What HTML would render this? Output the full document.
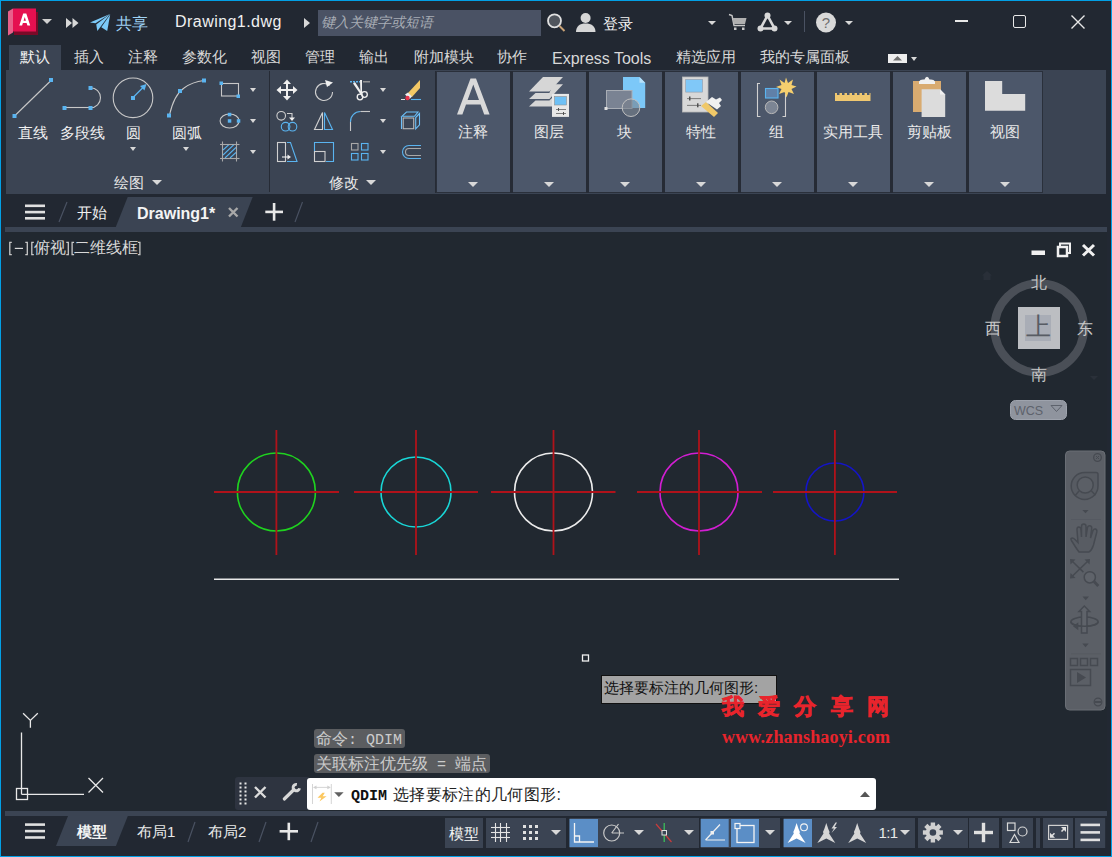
<!DOCTYPE html>
<html><head><meta charset="utf-8">
<style>
*{margin:0;padding:0;box-sizing:border-box}
html,body{width:1112px;height:857px;overflow:hidden}
body{position:relative;background:#02a0e6;font-family:"Liberation Sans",sans-serif;color:#e8e8e8;font-size:15px}
.a{position:absolute}
.t{position:absolute;white-space:nowrap;line-height:17px;font-size:15px}
svg{position:absolute;overflow:visible}
.dd{position:absolute;width:0;height:0;border-left:5px solid transparent;border-right:5px solid transparent;border-top:5px solid #d8d8d8}
.ds{position:absolute;width:0;height:0;border-left:4px solid transparent;border-right:4px solid transparent;border-top:4px solid #d8d8d8}
.bp{position:absolute;top:71px;width:76px;height:122px;background:#4c576a;border:1px solid #2a303b}
.bp .t{color:#f0f0f0}
.sb{position:absolute;top:818px;height:30px;background:#3b4453}
.act{background:#5b8ec6}
</style></head><body>
<div class="a" style="left:1px;top:1px;width:1110px;height:855px;background:#222832"></div>

<!-- ============ TITLE BAR ============ -->
<svg style="left:8px;top:8px" width="32" height="30" viewBox="0 0 32 30">
 <polygon points="6,4 30,4 30,27 6,27" fill="#7a0a28"/>
 <polygon points="0,3.5 5,0.5 5,24.5 0,27.5" fill="#e8608a"/>
 <rect x="5" y="0.5" width="23" height="23" fill="#e51050"/>
 <path d="M11.3,17.5 L15.2,5.5 L18.3,5.5 L22.2,17.5 L19.4,17.5 L18.6,15 L14.9,15 L14.1,17.5Z M15.6,12.8 L17.9,12.8 L16.75,9Z" fill="#fff"/>
</svg>
<div class="dd" style="left:42px;top:19px;border-top-color:#d0d0d0"></div>
<svg style="left:66px;top:18px" width="13" height="10"><polygon points="0,0 6,5 0,10" fill="#d8d8d8"/><polygon points="6.5,0 12.5,5 6.5,10" fill="#d8d8d8"/></svg>
<svg style="left:0;top:0" width="120" height="40" viewBox="0 0 120 40">
 <polygon points="90,22.4 110,13.9 95.5,23.2" fill="#7ccaf8"/>
 <polygon points="96.2,24.4 110,13.9 97.4,30.9" fill="#7ccaf8"/>
 <polygon points="101.3,27.2 110.2,14.5 107.2,30.9" fill="#7ccaf8"/>
</svg>
<div class="t" style="left:116px;top:14.5px;color:#9fd2f5;font-size:16px;line-height:18px">共享</div>
<div class="t" style="left:175px;top:13px;font-size:16px;color:#f0f0f0;letter-spacing:0.45px">Drawing1.dwg</div>
<svg style="left:304px;top:18px" width="7" height="10"><polygon points="0,0 6,5 0,10" fill="#d8d8d8"/></svg>
<div class="a" style="left:318px;top:10px;width:223px;height:26px;background:#4a5264"></div>
<div class="t" style="left:321px;top:13.5px;color:#a8adb5;font-style:italic;font-size:14px">键入关键字或短语</div>
<svg style="left:545px;top:12px" width="22" height="22" viewBox="0 0 22 22">
 <circle cx="9.5" cy="8.8" r="6.5" fill="#50555d" stroke="#e0e0e0" stroke-width="1.8"/>
 <line x1="14.5" y1="14" x2="19.5" y2="19" stroke="#c9a276" stroke-width="2"/>
</svg>
<svg style="left:576px;top:12px" width="21" height="21" viewBox="0 0 21 21">
 <circle cx="9.6" cy="6" r="5" fill="#d6d6d6"/>
 <path d="M0,20 C0,14 4,11.5 9.6,11.5 C15.2,11.5 19.5,14 19.5,20Z" fill="#d6d6d6"/>
</svg>
<div class="t" style="left:603px;top:15px;color:#f4f4f4">登录</div>
<div class="ds" style="left:708px;top:21px"></div>
<svg style="left:729px;top:14px" width="18" height="17" viewBox="0 0 18 17">
 <path d="M0,0.5 L3,1.5 L5,11.5 L16,11.5" fill="none" stroke="#c8c8c8" stroke-width="1.4"/>
 <polygon points="3.5,4 17.5,4 16,10 4.8,10" fill="#b0b0b0"/>
 <rect x="5" y="13.5" width="2.5" height="2.5" fill="#c8c8c8"/><rect x="13" y="13.5" width="2.5" height="2.5" fill="#c8c8c8"/>
</svg>
<svg style="left:757px;top:12px" width="21" height="20" viewBox="0 0 21 20">
 <polygon points="10.5,3.5 3.5,16.5 17.5,16.5" fill="none" stroke="#d8d8d8" stroke-width="2.6"/>
 <circle cx="10.5" cy="3.5" r="3" fill="#d8d8d8"/><circle cx="3.5" cy="16.5" r="3" fill="#d8d8d8"/><circle cx="17.5" cy="16.5" r="3" fill="#d8d8d8"/>
</svg>
<div class="ds" style="left:784px;top:21px"></div>
<div class="a" style="left:804px;top:11px;width:1px;height:21px;background:#4a5262"></div>
<svg style="left:815px;top:12px" width="22" height="22" viewBox="0 0 22 22">
 <circle cx="11" cy="10.5" r="10" fill="#d9d9d9"/>
 <text x="11" y="16" font-family="Liberation Sans" font-size="15" text-anchor="middle" fill="#6e6e6e">?</text>
</svg>
<div class="ds" style="left:845px;top:21px"></div>
<div class="a" style="left:955px;top:20px;width:13px;height:2px;background:#e8e8e8"></div>
<div class="a" style="left:1013px;top:15px;width:13px;height:13px;border:1.6px solid #e8e8e8;border-radius:2px"></div>
<svg style="left:1071px;top:15px" width="14" height="14"><path d="M0.5,0.5 L13.5,13.5 M13.5,0.5 L0.5,13.5" stroke="#e8e8e8" stroke-width="1.4"/></svg>

<!-- ============ RIBBON TABS ============ -->
<div class="a" style="left:9px;top:45px;width:52px;height:25px;background:#3b4453"></div>
<div class="t" style="left:20px;top:48px;color:#f0f0f0">默认</div>
<div class="t" style="left:74px;top:48px;color:#d8d8d8">插入</div>
<div class="t" style="left:128px;top:48px;color:#d8d8d8">注释</div>
<div class="t" style="left:182px;top:48px;color:#d8d8d8">参数化</div>
<div class="t" style="left:251px;top:48px;color:#d8d8d8">视图</div>
<div class="t" style="left:305px;top:48px;color:#d8d8d8">管理</div>
<div class="t" style="left:359px;top:48px;color:#d8d8d8">输出</div>
<div class="t" style="left:414px;top:48px;color:#d8d8d8">附加模块</div>
<div class="t" style="left:497px;top:48px;color:#d8d8d8">协作</div>
<div class="t" style="left:552px;top:49.5px;color:#d8d8d8;font-size:16px">Express Tools</div>
<div class="t" style="left:676px;top:48px;color:#d8d8d8">精选应用</div>
<div class="t" style="left:760px;top:48px;color:#d8d8d8">我的专属面板</div>
<div class="a" style="left:888px;top:54px;width:19px;height:9px;background:#eeeeee"></div>
<svg style="left:893px;top:56px" width="9" height="5"><polygon points="4.5,0 9,4.5 0,4.5" fill="#707070"/></svg>
<div class="ds" style="left:911px;top:57px;border-left-width:3.5px;border-right-width:3.5px"></div>

<!-- ============ RIBBON PANELS ============ -->
<div class="a" style="left:6px;top:70px;width:1100px;height:124px;background:#3b4453"></div>
<div class="a" style="left:269px;top:71px;width:1px;height:121px;background:#262b35"></div>
<div class="a" style="left:435px;top:71px;width:2px;height:122px;background:#262b35"></div>
<svg style="left:0;top:0" width="1112" height="200" viewBox="0 0 1112 200">
 <defs><clipPath id="hc"><rect x="223" y="145" width="13" height="13"/></clipPath></defs>
 <g stroke="#c8c8c8" stroke-width="1.1" fill="none">
  <line x1="15" y1="115.5" x2="51" y2="80.5"/>
  <line x1="65" y1="107.5" x2="90" y2="107.5"/>
  <path d="M90.5,87.8 A10,10 0 0 1 90.5,107.8"/>
  <circle cx="133" cy="97.8" r="19.8"/>
  <path d="M169.5,115 Q174,95 184,88 Q192,82 204,80.5"/>
  <rect x="221.5" y="83.5" width="17" height="12.5"/>
  <ellipse cx="229.6" cy="121" rx="9.5" ry="7"/>
 </g>
 <g fill="#5ab4f0">
  <rect x="12.5" y="114" width="4" height="4"/><rect x="49" y="78" width="4" height="4"/>
  <rect x="62.5" y="106" width="4" height="4"/><rect x="88.5" y="106" width="4" height="4"/><rect x="88.5" y="86" width="4" height="4"/>
  <rect x="131" y="96" width="4" height="4"/>
  <rect x="167" y="113.5" width="4" height="4"/><rect x="178" y="89" width="4" height="4"/><rect x="202" y="78.5" width="4" height="4"/>
  <rect x="219.5" y="81.5" width="3.5" height="3.5"/><rect x="236.5" y="94.5" width="3.5" height="3.5"/>
  <rect x="227.8" y="112.8" width="3.5" height="3.5"/><rect x="227.8" y="119.2" width="3.5" height="3.5"/><rect x="236.8" y="119.2" width="3.5" height="3.5"/>
 </g>
 <line x1="134" y1="96.5" x2="144" y2="86.5" stroke="#5ab4f0" stroke-width="1.3"/>
 <polygon points="146.5,84 140,86 144.5,90.5" fill="#5ab4f0"/>
 <!-- hatch -->
 <g stroke="#a8a8a8" stroke-width="1.1">
  <line x1="222.5" y1="141.5" x2="222.5" y2="161.5"/><line x1="236.5" y1="141.5" x2="236.5" y2="161.5"/>
  <line x1="220" y1="144.5" x2="239.5" y2="144.5"/><line x1="220" y1="158.5" x2="239.5" y2="158.5"/>
 </g>
 <g stroke="#5ab4f0" stroke-width="1.1" clip-path="url(#hc)">
  <line x1="223" y1="150" x2="229" y2="144.5"/><line x1="223" y1="155" x2="234" y2="144.5"/><line x1="225" y1="158" x2="236" y2="147.5"/><line x1="230" y1="158" x2="236" y2="152.5"/>
 </g>
 <!-- modify: move -->
 <g fill="#f0f0f0">
  <rect x="286" y="82" width="2" height="16"/><rect x="279" y="89" width="16" height="2"/>
  <polygon points="287,79.5 283,84 291,84"/><polygon points="287,100.5 283,96 291,96"/>
  <polygon points="276.5,90 281,86 281,94"/><polygon points="297.5,90 293,86 293,94"/>
 </g>
 <!-- rotate -->
 <path d="M329.5,85.5 A8.5,8.5 0 1 0 332.5,92" fill="none" stroke="#d0d0d0" stroke-width="1.1"/>
 <polygon points="333,82.5 325,80 327,87" fill="#f0f0f0"/>
 <!-- copy -->
 <circle cx="281.2" cy="115.8" r="4.3" fill="none" stroke="#d0d0d0" stroke-width="1.1"/>
 <path d="M287,113.5 L292,113.5 L292,118" fill="none" stroke="#d0d0d0" stroke-width="1.1"/>
 <polygon points="289,117.5 295,117.5 292,121" fill="#f0f0f0"/>
 <circle cx="285.6" cy="126.7" r="4.3" fill="none" stroke="#5ab4f0" stroke-width="1.1"/>
 <circle cx="292.5" cy="126.7" r="4.3" fill="none" stroke="#5ab4f0" stroke-width="1.1"/>
 <!-- mirror -->
 <polygon points="322.5,112.5 322.5,129.5 314.5,129.5" fill="none" stroke="#d0d0d0" stroke-width="1.1"/>
 <polygon points="324.5,112.5 324.5,129.5 332.5,129.5" fill="none" stroke="#5ab4f0" stroke-width="1.1"/>
 <!-- stretch -->
 <rect x="277.5" y="142.5" width="8" height="19" fill="none" stroke="#d0d0d0" stroke-width="1.1"/>
 <path d="M287,142.5 L290.5,142.5 L297,161.5 L287,161.5" fill="none" stroke="#5ab4f0" stroke-width="1.1"/>
 <line x1="282" y1="157" x2="288" y2="157" stroke="#f0f0f0" stroke-width="1.1"/><polygon points="291,157 287.5,154.5 287.5,159.5" fill="#f0f0f0"/>
 <!-- scale -->
 <path d="M314.5,152 L314.5,142.5 L333.5,142.5 L333.5,161.5 L326,161.5" fill="none" stroke="#5ab4f0" stroke-width="1.1"/>
 <rect x="314.5" y="151.5" width="10.5" height="10" fill="none" stroke="#d0d0d0" stroke-width="1.1"/>
 <!-- trim -->
 <line x1="350" y1="81.8" x2="360" y2="81.8" stroke="#5ab4f0" stroke-width="1.4" stroke-dasharray="2,1"/>
 <line x1="363" y1="81.8" x2="370" y2="81.8" stroke="#a0a0a0" stroke-width="1.3"/>
 <polygon points="353,83.5 355,82 362,93 361,95" fill="#f0f0f0"/>
 <polygon points="360,80 362,80 362,94 360.5,94" fill="#f0f0f0"/>
 <circle cx="360" cy="97" r="2.8" fill="none" stroke="#f0f0f0" stroke-width="1.3"/>
 <circle cx="364.5" cy="94.5" r="2.8" fill="none" stroke="#f0f0f0" stroke-width="1.3"/>
 <!-- erase -->
 <polygon points="408,93 420,80 420,88 412,97" fill="#f3c865"/>
 <polygon points="405,94.5 408,92.5 412,96.5 409.5,99" fill="#f0f0f0"/>
 <circle cx="407.5" cy="98" r="2.2" fill="#e8344a"/>
 <line x1="401" y1="99.5" x2="405" y2="99.5" stroke="#e0e0e0" stroke-width="1"/>
 <line x1="411" y1="99.5" x2="421" y2="99.5" stroke="#5ab4f0" stroke-width="1.1"/>
 <!-- fillet -->
 <path d="M350.5,122 A10,10 0 0 1 360.5,111.5" fill="none" stroke="#5ab4f0" stroke-width="1.1"/>
 <line x1="360.5" y1="111.5" x2="370" y2="111.5" stroke="#c8c8c8" stroke-width="1.1"/>
 <line x1="350.5" y1="122" x2="350.5" y2="131" stroke="#c8c8c8" stroke-width="1.1"/>
 <!-- explode/3d box -->
 <path d="M401.8,116.3 L406.5,112 L418,112 L414.5,116.3 Z" fill="none" stroke="#6cc0f8" stroke-width="1.1"/>
 <line x1="401.5" y1="116.5" x2="401.5" y2="129" stroke="#6cc0f8" stroke-width="1.1"/>
 <path d="M415.7,117.5 L419.5,113.5 L419.5,124.8 L415.7,128.8 Z" fill="none" stroke="#6cc0f8" stroke-width="1.1"/>
 <rect x="403.2" y="118" width="10.5" height="10.7" fill="none" stroke="#b8b8b8" stroke-width="1.1"/>
 <!-- array -->
 <rect x="351.5" y="143.5" width="6.5" height="6.5" fill="none" stroke="#a8a8a8" stroke-width="1.1"/>
 <rect x="361.5" y="143.5" width="6.5" height="6.5" fill="none" stroke="#5ab4f0" stroke-width="1.1"/>
 <rect x="351.5" y="153.5" width="6.5" height="6.5" fill="none" stroke="#5ab4f0" stroke-width="1.1"/>
 <rect x="361.5" y="153.5" width="6.5" height="6.5" fill="none" stroke="#5ab4f0" stroke-width="1.1"/>
 <!-- offset -->
 <path d="M421,145.5 L409,145.5 A6.5,6.5 0 0 0 409,158.5 L421,158.5" fill="none" stroke="#5ab4f0" stroke-width="1.1"/>
 <path d="M421,148.5 L409,148.5 A3.5,3.5 0 0 0 409,155.5 L421,155.5" fill="none" stroke="#a8a8a8" stroke-width="1.1"/>
</svg>
<div class="t" style="left:18px;top:124px;color:#f0f0f0">直线</div>
<div class="t" style="left:60px;top:124px;color:#f0f0f0">多段线</div>
<div class="t" style="left:126px;top:124px;color:#f0f0f0">圆</div>
<div class="t" style="left:172px;top:124px;color:#f0f0f0">圆弧</div>
<div class="dd" style="left:130px;top:147px;border-left-width:3.5px;border-right-width:3.5px;border-top-width:4px"></div>
<div class="dd" style="left:183px;top:147px;border-left-width:3.5px;border-right-width:3.5px;border-top-width:4px"></div>
<div class="dd" style="left:250px;top:88px;border-left-width:3.5px;border-right-width:3.5px;border-top-width:4px"></div>
<div class="dd" style="left:250px;top:119px;border-left-width:3.5px;border-right-width:3.5px;border-top-width:4px"></div>
<div class="dd" style="left:250px;top:150px;border-left-width:3.5px;border-right-width:3.5px;border-top-width:4px"></div>
<div class="dd" style="left:380px;top:88px;border-left-width:3.5px;border-right-width:3.5px;border-top-width:4px"></div>
<div class="dd" style="left:380px;top:119px;border-left-width:3.5px;border-right-width:3.5px;border-top-width:4px"></div>
<div class="dd" style="left:380px;top:150px;border-left-width:3.5px;border-right-width:3.5px;border-top-width:4px"></div>
<div class="t" style="left:114px;top:174px;color:#e8e8e8">绘图</div>
<div class="dd" style="left:152px;top:180px"></div>
<div class="t" style="left:329px;top:174px;color:#e8e8e8">修改</div>
<div class="dd" style="left:366px;top:180px"></div>
<!-- big panels -->
<div class="bp" style="left:436px;width:75px"></div>
<div class="bp" style="left:511px"></div>
<div class="bp" style="left:587px"></div>
<div class="bp" style="left:663px"></div>
<div class="bp" style="left:739px"></div>
<div class="bp" style="left:815px"></div>
<div class="bp" style="left:891px"></div>
<div class="bp" style="left:967px"></div>
<div class="a" style="left:510px;top:71px;width:3px;height:122px;background:#262b35"></div>
<div class="a" style="left:586px;top:71px;width:3px;height:122px;background:#262b35"></div>
<div class="a" style="left:662px;top:71px;width:3px;height:122px;background:#262b35"></div>
<div class="a" style="left:738px;top:71px;width:3px;height:122px;background:#262b35"></div>
<div class="a" style="left:814px;top:71px;width:3px;height:122px;background:#262b35"></div>
<div class="a" style="left:890px;top:71px;width:3px;height:122px;background:#262b35"></div>
<div class="a" style="left:966px;top:71px;width:3px;height:122px;background:#262b35"></div>
<div class="t" style="left:458px;top:123px">注释</div>
<div class="t" style="left:534px;top:123px">图层</div>
<div class="t" style="left:617px;top:123px">块</div>
<div class="t" style="left:686px;top:123px">特性</div>
<div class="t" style="left:769px;top:123px">组</div>
<div class="t" style="left:823px;top:123px">实用工具</div>
<div class="t" style="left:907px;top:123px">剪贴板</div>
<div class="t" style="left:990px;top:123px">视图</div>
<div class="dd" style="left:468px;top:182px"></div>
<div class="dd" style="left:544px;top:182px"></div>
<div class="dd" style="left:620px;top:182px"></div>
<div class="dd" style="left:696px;top:182px"></div>
<div class="dd" style="left:772px;top:182px"></div>
<div class="dd" style="left:848px;top:182px"></div>
<div class="dd" style="left:924px;top:182px"></div>
<div class="dd" style="left:1000px;top:182px"></div>
<svg style="left:0;top:0" width="1112" height="200" viewBox="0 0 1112 200">
 <!-- A -->
 <path d="M457,114.4 L470.5,78.5 L476,78.5 L489.6,114.4 L484.2,114.4 L480.6,104.5 L466,104.5 L462.4,114.4Z M467.6,100 L479,100 L473.3,84.5Z" fill="#d9d9d9"/>
 <!-- layers -->
 <polygon points="543,77 563,77 549.4,91.4 529,91.4" fill="#d6d6d6"/>
 <polygon points="553,84.2 563,84.2 549.4,99 529,99 535.5,92.9 549.4,92.9" fill="#d6d6d6"/>
 <polygon points="535.5,100.5 549.4,100.5 552,98 552,106.5 529,106.5" fill="#d6d6d6"/>
 <rect x="552" y="93.9" width="17" height="23" fill="#e8e8e8"/>
 <rect x="554.5" y="96.5" width="12" height="8.5" fill="#6ec0f5" stroke="#909090" stroke-width="0.6"/>
 <g stroke="#606060" stroke-width="0.8"><line x1="556" y1="109.5" x2="566" y2="109.5"/><line x1="556" y1="113.5" x2="566" y2="113.5"/></g><rect x="558" y="108" width="1" height="3" fill="#505050"/><rect x="563" y="112" width="1" height="3" fill="#505050"/>
 <!-- block -->
 <path d="M623,77 L639.5,77 L645.2,82.7 L645.2,108 L623,108Z" fill="#7cc8f8"/>
 <polygon points="639.5,77 645.2,82.7 639.5,82.7" fill="#b8e2fb"/>
 <rect x="606.5" y="90.5" width="25.5" height="18" fill="#7a8393" stroke="#a8adb5" stroke-width="1"/>
 <circle cx="631" cy="107.7" r="8.8" fill="rgba(120,128,140,0.6)" stroke="#c0c0c0" stroke-width="1"/>
 <rect x="604.5" y="107" width="3" height="3" fill="#e0e0e0"/>
 <!-- properties -->
 <rect x="682.5" y="77" width="25.5" height="35" fill="#d8d8d8" stroke="#b8b8b8" stroke-width="0.8"/>
 <rect x="685.7" y="79.5" width="16.8" height="12.6" fill="#80c8f8" stroke="#909aa8" stroke-width="0.6"/>
 <g stroke="#707070" stroke-width="0.9"><line x1="687" y1="98.6" x2="701" y2="98.6"/><line x1="687" y1="105.4" x2="701" y2="105.4"/></g>
 <rect x="689" y="96.5" width="1.5" height="4" fill="#505050"/><rect x="697" y="103.3" width="1.5" height="4" fill="#505050"/>
 <polygon points="701,106 706,102 718,113 714,117" fill="#f0c868"/>
 <polygon points="706,102 712,97 716,99.5 720,97.5 722,100 719,103 721,106 717,109.5" fill="#f0f0f0"/>
 <!-- group -->
 <path d="M760,83.5 L757.5,83.5 L757.5,116.5 L760.5,116.5 M782.5,116.5 L785.5,116.5 L785.5,94" fill="none" stroke="#d0d0d0" stroke-width="1.1"/>
 <rect x="765.5" y="88.5" width="12.5" height="9.5" fill="#6080a8" stroke="#5ab4f0" stroke-width="1.1"/>
 <circle cx="771.6" cy="107.3" r="6.3" fill="#7c8594" stroke="#b8b8b8" stroke-width="1"/>
 <polygon points="786,77.5 788,83 793,79.5 791.5,85 796.5,86.5 791.5,89 794,94 788.5,92 786.5,97.5 784.5,92 779,94 781.5,89 776,87 781.5,85 779.5,79.5 784.5,83" fill="#f6cf6e"/>
 <!-- ruler -->
 <polygon points="835,93 837,93 837,95 839.5,95 839.5,93 842,93 842,95 844.5,95 844.5,93 847,93 847,95 849.5,95 849.5,93 852,93 852,95 854.5,95 854.5,93 857,93 857,95 859.5,95 859.5,93 862,93 862,95 864.5,95 864.5,93 867,93 867,95 869.5,95 869.5,93 870.5,93 870.5,101 835,101" fill="#f0c870"/>
 <!-- clipboard -->
 <rect x="913" y="81" width="28" height="31" fill="#d9ab70"/>
 <path d="M919,84 L919,81.5 Q920,79.5 923,79.5 L924.5,79.5 Q925.5,76.8 927,76.8 Q928.5,76.8 929.5,79.5 L931,79.5 Q934,79.5 935,81.5 L935,84Z" fill="#f0f0f0"/>
 <path d="M921.6,89.3 L940,89.3 L945.2,94.5 L945.2,117 L921.6,117Z" fill="#dcdcdc"/>
 <polygon points="940,89.3 945.2,94.5 940,94.5" fill="#f0f0f0"/>
 <!-- view L -->
 <polygon points="985,81 1002.2,81 1002.2,94 1025.2,94 1025.2,110.8 985,110.8" fill="#dcdcdc"/>
</svg>
<!-- ============ FILE TABS ============ -->
<div class="a" style="left:5px;top:227px;width:1102px;height:5px;background:#3b4453"></div>
<svg style="left:0;top:190px" width="1112" height="45" viewBox="0 190 1112 45">
 <polygon points="127.7,197 252.7,197 240.9,227 115.8,227" fill="#3b4453"/>
 <g fill="#e0e0e0"><rect x="25" y="204.5" width="20" height="2.6"/><rect x="25" y="210.8" width="20" height="2.6"/><rect x="25" y="217" width="20" height="2.6"/></g>
 <line x1="67" y1="202" x2="59" y2="222" stroke="#4a5262" stroke-width="1.2"/>
 <path d="M229,208 L237.5,216.5 M237.5,208 L229,216.5" stroke="#a8a8a8" stroke-width="2.4"/>
 <rect x="265.3" y="210.6" width="17.7" height="2.6" fill="#e8e8e8"/><rect x="272.8" y="203" width="2.6" height="17.7" fill="#e8e8e8"/>
 <line x1="302.5" y1="202" x2="295" y2="222" stroke="#4a5262" stroke-width="1.2"/>
</svg>
<div class="t" style="left:77px;top:204px;color:#f0f0f0">开始</div>
<div class="t" style="left:137px;top:204.5px;color:#f4f4f4;font-weight:bold;font-size:16px">Drawing1*</div>

<!-- ============ VIEWPORT ============ -->
<div class="a" style="left:5px;top:232px;width:1102px;height:579px;background:#212830"></div>
<svg style="left:0;top:236px" width="150" height="24" viewBox="0 236 150 24">
 <g fill="none" stroke="#c8c8c8" stroke-width="1.3">
  <path d="M11.8,242.3 L9.8,242.3 L9.8,254.7 L11.8,254.7"/><path d="M25.3,242.3 L27.3,242.3 L27.3,254.7 L25.3,254.7"/>
  <path d="M33.8,242.3 L31.8,242.3 L31.8,254.7 L33.8,254.7"/><path d="M66.3,242.3 L68.3,242.3 L68.3,254.7 L66.3,254.7"/>
  <path d="M74.1,242.3 L72.1,242.3 L72.1,254.7 L74.1,254.7"/><path d="M137.9,242.3 L139.9,242.3 L139.9,254.7 L137.9,254.7"/>
 </g>
 <rect x="14.8" y="247.8" width="8.2" height="1.2" fill="#d8d8d8"/>
</svg>
<div class="t" style="left:34px;top:239px;color:#d8d8d8;font-size:16px;line-height:18px">俯视</div>
<div class="t" style="left:74px;top:239px;color:#d8d8d8;font-size:16px;line-height:18px">二维线框</div>
<svg style="left:0;top:230px" width="1112" height="600" viewBox="0 230 1112 600">
 <!-- viewport controls -->
 <rect x="1031.5" y="250.5" width="13.5" height="4.5" fill="#f0f0f0"/>
 <path d="M1060,246 L1060,243.5 L1070,243.5 L1070,253 L1067,253" fill="none" stroke="#f0f0f0" stroke-width="2"/>
 <rect x="1058" y="247" width="9" height="9" fill="none" stroke="#f0f0f0" stroke-width="2.5"/>
 <path d="M1083,245 L1094,255.5 M1094,245 L1083,255.5" stroke="#f0f0f0" stroke-width="3"/>
 <!-- viewcube -->
 <circle cx="1039.2" cy="328" r="44.6" fill="none" stroke="#4a4f57" stroke-width="8.4"/>
 <rect x="1018" y="307" width="42" height="42" fill="#bcbec2"/>
 <rect x="1025" y="315" width="26" height="26" fill="#a9adb6"/>
 <path d="M987,271 L992,275.5 L990.5,275.5 L990.5,280 L983.5,280 L983.5,275.5 L982,275.5Z" fill="#292f38"/>
 <polygon points="1090,376 1098,376 1094,380" fill="#2a3039"/>
 <rect x="1010.5" y="400.5" width="56" height="19" rx="5" fill="#8f949e" stroke="#9ea3ad" stroke-width="1"/>
 <text x="1014" y="415" font-family="Liberation Sans" font-size="12.5" fill="#5d626c">WCS</text>
 <polygon points="1051,405.5 1062,405.5 1056.5,411.5" fill="none" stroke="#5d626c" stroke-width="1"/>
 <!-- drawing -->
 <g fill="none" stroke-width="1.6">
  <circle cx="276.4" cy="492" r="39" stroke="#1fd21f"/>
  <circle cx="416" cy="492" r="35" stroke="#19d6d6"/>
  <circle cx="553.5" cy="492" r="39" stroke="#ececec"/>
  <circle cx="699" cy="492" r="39" stroke="#d21ed2"/>
  <circle cx="834.9" cy="492" r="29" stroke="#1414c8"/>
 </g>
 <g stroke="#b0121a" stroke-width="1.8">
  <line x1="214" y1="492" x2="339" y2="492"/><line x1="276.4" y1="430" x2="276.4" y2="555"/>
  <line x1="354" y1="492" x2="478" y2="492"/><line x1="416" y1="430" x2="416" y2="555"/>
  <line x1="491" y1="492" x2="615.5" y2="492"/><line x1="553.5" y1="430" x2="553.5" y2="555"/>
  <line x1="637" y1="492" x2="762" y2="492"/><line x1="699" y1="430" x2="699" y2="555"/>
  <line x1="773" y1="492" x2="897" y2="492"/><line x1="834.9" y1="430" x2="834.9" y2="555"/>
 </g>
 <line x1="214" y1="579.3" x2="899" y2="579.3" stroke="#e8e8e8" stroke-width="1.5"/>
 <rect x="582.5" y="655" width="6" height="6" fill="none" stroke="#f0f0f0" stroke-width="1.3"/>
 <!-- tooltip -->
 <rect x="601.5" y="675.5" width="175" height="28" fill="#a3a3a3" stroke="#111" stroke-width="1"/>
 <!-- UCS -->
 <g stroke="#e8e8e8" stroke-width="1.3" fill="none">
  <line x1="21.5" y1="732.5" x2="21.5" y2="794.3"/>
  <line x1="21.5" y1="794.3" x2="84" y2="794.3"/>
  <rect x="16.5" y="788.5" width="11" height="11"/>
  <path d="M88.5,778 L103,792.5 M103,778 L88.5,792.5"/>
  <path d="M23.1,713.2 L30.4,720.4 L37.8,713.2 M30.4,720.4 L30.4,727.8"/>
 </g>
</svg>
<div class="t" style="left:1031px;top:273.5px;color:#c8c8c8;font-family:'Liberation Serif',serif;font-size:16px;line-height:18px">北</div>
<div class="t" style="left:1031px;top:365.5px;color:#c8c8c8;font-family:'Liberation Serif',serif;font-size:16px;line-height:18px">南</div>
<div class="t" style="left:985px;top:319.5px;color:#c8c8c8;font-family:'Liberation Serif',serif;font-size:16px;line-height:18px">西</div>
<div class="t" style="left:1076.5px;top:320px;color:#c8c8c8;font-family:'Liberation Serif',serif;font-size:16px;line-height:18px">东</div>
<div class="t" style="left:1026px;top:313px;color:#585c64;font-family:'Liberation Serif',serif;font-size:25px;line-height:28px">上</div>
<div class="t" style="left:604px;top:678.5px;color:#111;font-size:15px">选择要标注的几何图形:</div>
<div class="t" style="left:722px;top:695px;color:#e8242c;font-size:22px;line-height:24px;font-weight:bold;letter-spacing:14.2px;-webkit-text-stroke:0.7px #e8242c">我爱分享网</div>
<div class="t" style="left:722px;top:727px;color:#e8242c;font-size:18px;line-height:20px;font-weight:bold;letter-spacing:0.18px;font-family:'Liberation Serif',serif">www.zhanshaoyi.com</div>
<!-- nav bar -->
<svg style="left:1060px;top:445px" width="50" height="270" viewBox="1060 445 50 270">
 <rect x="1065.5" y="451" width="39.5" height="259" rx="4" fill="#5b5f66" stroke="#6a6e75" stroke-width="1"/>
 <g stroke="#464a51" fill="none" stroke-width="1.5">
  <circle cx="1097.5" cy="457.5" r="3.8" stroke-width="1.3"/>
  <path d="M1096,456 L1099,459 M1099,456 L1096,459" stroke-width="1"/>
  <path d="M1084.6,472.6 L1096,472.6 Q1098,472.6 1098,474.6 L1098,486 A13.4,13.4 0 1 1 1084.6,472.6 Z" fill="#575b62"/>
  <circle cx="1085.2" cy="485" r="8" fill="#5b5f66"/>
  <path d="M1079,491 L1075.2,495.6 M1091.5,491 L1095.5,495.3"/>
  <line x1="1071" y1="519.5" x2="1101" y2="519.5" stroke-width="0.8" stroke="#54585f"/>
  <path d="M1079,552 Q1076,548 1073,543 Q1070.5,539.5 1071,538.5 Q1072.5,537 1075,539.5 L1078,542.5 L1077,530 Q1076.8,527 1078.8,527 Q1080.8,527 1081,530 L1081.5,537 L1081.5,526.5 Q1081.5,524 1083.8,524 Q1086,524 1086,526.5 L1086,537 L1087.5,527.5 Q1088,525.5 1090,525.7 Q1092,526 1091.7,528.5 L1090.5,538 L1093,530.5 Q1093.8,528.5 1095.5,529 Q1097.3,529.7 1096.8,532 L1093.5,545 Q1092,550 1089,552 Z" fill="#585c63"/>
  <line x1="1083.4" y1="572.1" x2="1072" y2="561"/><line x1="1072" y1="576.5" x2="1088" y2="561"/>
  <circle cx="1089.8" cy="577.3" r="5.6" fill="#5f636a"/>
  <line x1="1094" y1="581.5" x2="1098.3" y2="586" stroke-width="2.8"/>
  <ellipse cx="1084.5" cy="621.7" rx="13.6" ry="4.6"/>
  <path d="M1081.5,633 L1081.5,611.5 L1079,611.5 L1084.3,606 L1089.6,611.5 L1087,611.5 L1087,633 Z" fill="#5f636a"/>
  <path d="M1070.9,621.7 A13.6,4.6 0 0 0 1098.1,621.7"/>
  <line x1="1071" y1="653.8" x2="1101" y2="653.8" stroke-width="0.8" stroke="#54585f"/>
  <rect x="1070.5" y="658.5" width="7" height="7"/><rect x="1080.5" y="658.5" width="7" height="7"/><rect x="1090.5" y="658.5" width="7" height="7"/>
  <rect x="1070.5" y="669.5" width="20" height="16"/>
  <circle cx="1098" cy="702" r="3.8" stroke-width="1.3"/>
 </g>
 <g fill="#464a51">
  <polygon points="1070,559 1075.5,559.5 1070.5,564.5"/><polygon points="1090,559 1084.5,559.5 1089.5,564.5"/><polygon points="1070,578.5 1070.5,573 1075.5,578"/>
  <polygon points="1082.3,510 1088.6,510 1085.5,513.3"/>
  <polygon points="1082.5,596.5 1089,596.5 1085.7,600.3"/>
  <polygon points="1082.3,643.5 1088.7,643.5 1085.5,647.3"/>
  <polygon points="1073,626.3 1078.3,622.3 1078.3,630.3"/>
  <polygon points="1077,672 1077,683 1086,677.5"/>
  <rect x="1095" y="701" width="6" height="2"/>
 </g>
</svg>

<!-- command history -->
<div class="a" style="left:314px;top:729px;width:91px;height:19px;background:#5b5d60;border-radius:3px"></div>
<div class="a" style="left:314px;top:754px;width:176px;height:19px;background:#5b5d60;border-radius:3px"></div>
<div class="t" style="left:316px;top:730.5px;color:#cccccc;font-family:'Liberation Mono',monospace;font-size:16px;line-height:19px">命令<span style="font-size:15px">: QDIM</span></div>
<div class="t" style="left:316px;top:755.5px;color:#cccccc;font-family:'Liberation Mono',monospace;font-size:16px;line-height:19px">关联标注优先级<span style="font-size:15px"> = </span>端点</div>

<!-- command line -->
<div class="a" style="left:235px;top:777px;width:75px;height:33px;background:#2e3440;border-radius:3px"></div>
<div class="a" style="left:307px;top:778px;width:569px;height:32px;background:#ffffff;border-radius:3px"></div>
<svg style="left:230px;top:775px" width="650" height="40" viewBox="230 775 650 40">
 <g fill="#e8e8e8">
  <rect x="239.5" y="782.5" width="2" height="2"/><rect x="244.5" y="782.5" width="2" height="2"/>
  <rect x="239.5" y="786.5" width="2" height="2"/><rect x="244.5" y="786.5" width="2" height="2"/>
  <rect x="239.5" y="790.5" width="2" height="2"/><rect x="244.5" y="790.5" width="2" height="2"/>
  <rect x="239.5" y="794.5" width="2" height="2"/><rect x="244.5" y="794.5" width="2" height="2"/>
  <rect x="239.5" y="798.5" width="2" height="2"/><rect x="244.5" y="798.5" width="2" height="2"/>
  <rect x="239.5" y="802.5" width="2" height="2"/><rect x="244.5" y="802.5" width="2" height="2"/>
 </g>
 <path d="M255,787 L265.5,797.5 M265.5,787 L255,797.5" stroke="#dcdcdc" stroke-width="2.4"/>
 <line x1="284.3" y1="799" x2="294" y2="789.5" stroke="#d8d8d8" stroke-width="3.2" stroke-linecap="round"/>
 <path d="M299.45,788.16 A3.2,3.2 0 1 1 296.86,784.45" fill="none" stroke="#d8d8d8" stroke-width="2.9"/>
 <g stroke="#d0d0d0" stroke-width="0.9" fill="none">
  <line x1="312.5" y1="784" x2="312.5" y2="804"/><line x1="331.3" y1="784" x2="331.3" y2="804"/>
  <line x1="314" y1="787.4" x2="330" y2="787.4"/>
 </g>
 <polygon points="313,787.4 316.5,785.5 316.5,789.3" fill="#d0d0d0"/><polygon points="330.8,787.4 327.3,785.5 327.3,789.3" fill="#d0d0d0"/>
 <polygon points="322.5,792.8 317.5,797.8 321.3,797.8 319.5,801.6 326.6,796.3 322.7,796.3 324.8,792.8" fill="#fcc860"/>
 <polygon points="334.2,792.2 343.6,792.2 338.9,797" fill="#606060"/>
 <polygon points="860,797 870,797 865,791.5" fill="#555"/>
</svg>
<div class="t" style="left:351px;top:787.5px;color:#111;font-family:'Liberation Mono',monospace;font-weight:bold;font-size:15px">QDIM</div>
<div class="t" style="left:393px;top:785.5px;color:#222;font-size:16px;line-height:18px;letter-spacing:0.35px">选择要标注的几何图形:</div>

<!-- ============ STATUS BAR ============ -->
<div class="a" style="left:5px;top:811px;width:1102px;height:5px;background:#3b4453"></div>
<svg style="left:0;top:810px" width="1112" height="47" viewBox="0 810 1112 47">
 <polygon points="68,816 127.8,816 115.9,846 56,846" fill="#3b4453"/>
 <g fill="#e0e0e0"><rect x="25" y="823.3" width="20" height="2.6"/><rect x="25" y="829.8" width="20" height="2.6"/><rect x="25" y="836.2" width="20" height="2.6"/></g>
 <g stroke="#4a5262" stroke-width="1.2">
  <line x1="195" y1="822" x2="188" y2="842"/><line x1="266" y1="822" x2="259" y2="842"/><line x1="318" y1="822" x2="311" y2="842"/>
 </g>
 <rect x="279.6" y="830" width="18.4" height="2.6" fill="#e8e8e8"/><rect x="287.5" y="822.7" width="2.6" height="17.5" fill="#e8e8e8"/>
 <!-- buttons -->
 <g fill="#3b4453">
  <rect x="445" y="818" width="38" height="30"/>
  <rect x="486" y="818" width="80" height="30"/>
  <rect x="569.5" y="818" width="129.5" height="30"/>
  <rect x="700.7" y="818" width="79.3" height="30"/>
  <rect x="783.6" y="818" width="131.4" height="30"/>
  <rect x="918" y="818" width="50" height="30"/>
  <rect x="969" y="818" width="30" height="30"/>
  <rect x="1002" y="818" width="31" height="30"/>
  <rect x="1036" y="818" width="4" height="30"/>
  <rect x="1043" y="818" width="30" height="30"/>
  <rect x="1075" y="818" width="30.2" height="30"/>
 </g>
 <g fill="#5b8ec6">
  <rect x="569.5" y="819" width="28.5" height="28"/>
  <rect x="700.7" y="819" width="28" height="28"/>
  <rect x="731" y="819" width="28" height="28"/>
  <rect x="783.6" y="819" width="28.4" height="28"/>
 </g>
 <!-- grid -->
 <g stroke="#e4e4e4" stroke-width="1.1">
  <line x1="491" y1="827.5" x2="510" y2="827.5"/><line x1="491" y1="832.5" x2="510" y2="832.5"/><line x1="491" y1="837.5" x2="510" y2="837.5"/>
  <line x1="495.5" y1="823" x2="495.5" y2="842"/><line x1="500.5" y1="823" x2="500.5" y2="842"/><line x1="506.5" y1="823" x2="506.5" y2="842"/>
 </g>
 <g fill="#e0e0e0">
  <rect x="523" y="825" width="3" height="3"/><rect x="529" y="825" width="3" height="3"/><rect x="535" y="825" width="3" height="3"/>
  <rect x="523" y="831" width="3" height="3"/><rect x="529" y="831" width="3" height="3"/><rect x="535" y="831" width="3" height="3"/>
  <rect x="523" y="837" width="3" height="3"/><rect x="529" y="837" width="3" height="3"/><rect x="535" y="837" width="3" height="3"/>
 </g>
 <!-- ortho -->
 <path d="M574.5,823 L574.5,842 L594,842 M574.5,836 L579.5,836 L579.5,842" fill="none" stroke="#f4f4f4" stroke-width="1.3"/>
 <!-- polar -->
 <circle cx="611.7" cy="833" r="8" fill="none" stroke="#c8c8c8" stroke-width="1.2"/>
 <path d="M611.7,833 L618.5,824 M611.7,833 L624,833" stroke="#c8c8c8" stroke-width="1.2"/>
 <!-- iso -->
 <line x1="656" y1="824" x2="671.5" y2="842" stroke="#c83c3c" stroke-width="1.2"/>
 <line x1="664.2" y1="823" x2="664.2" y2="842" stroke="#3cc85a" stroke-width="1.2"/>
 <rect x="662" y="830.5" width="4.5" height="4.5" fill="#3b4453" stroke="#e0e0e0" stroke-width="1"/>
 <!-- osnap track -->
 <path d="M705.5,840 L720,824.5 M705.5,840 L725,840" stroke="#f0f0f0" stroke-width="1.2"/>
 <rect x="710.5" y="831" width="3.5" height="3.5" fill="#f0f0f0"/>
 <!-- osnap -->
 <rect x="737" y="825.5" width="17" height="17" fill="none" stroke="#f4f4f4" stroke-width="1.3"/>
 <rect x="735" y="823.5" width="5" height="5" fill="#5b8ec6" stroke="#f4f4f4" stroke-width="1.2"/>
 <!-- annotation icons -->
 <polygon points="796.6,823 798.6,829 799.9,832 799.4,833.5 805.6,843 796.6,838.5 787.6,843 793.8,833.5 793.3,832 794.6,829" fill="#ffffff"/>
 <circle cx="804" cy="827.3" r="3.4" fill="none" stroke="#f4f4f4" stroke-width="1.1"/>
 <polygon points="826.3,823 828.3,829 829.6,832 829.1,833.5 835.3,843 826.3,838.5 817.3,843 823.5,833.5 823.0,832 824.3,829" fill="#d6d6d6"/>
 <polygon points="857.2,823 859.2,829 860.5,832 860.0,833.5 866.2,843 857.2,838.5 848.2,843 854.4,833.5 853.9,832 855.2,829" fill="#d6d6d6"/>
 <polygon points="835.5,822.5 831.5,828.5 834,828.5 831.5,833 837,827 834.5,827 837,822.5" fill="#d6d6d6"/>
 <!-- gear -->
 <g transform="translate(932.9,832.5)">
  <circle r="7.2" fill="#d0d0d0"/>
  <g fill="#d0d0d0"><rect x="-2.2" y="-10" width="4.4" height="20"/><rect x="-10" y="-2.2" width="20" height="4.4"/>
   <rect x="-2.2" y="-10" width="4.4" height="20" transform="rotate(45)"/><rect x="-2.2" y="-10" width="4.4" height="20" transform="rotate(-45)"/></g>
  <circle r="3.3" fill="#3b4453"/>
 </g>
 <rect x="974" y="830.8" width="19" height="3.4" fill="#e0e0e0"/><rect x="981.8" y="822.8" width="3.4" height="19.4" fill="#e0e0e0"/>
 <!-- shapes -->
 <g fill="none" stroke="#d8d8d8" stroke-width="1.2">
  <rect x="1007.5" y="823" width="7.5" height="7.5"/>
  <circle cx="1022.5" cy="831.5" r="4.5"/>
  <polygon points="1014.5,834.5 1010,842.5 1019,842.5"/>
 </g>
 <!-- fullscreen -->
 <rect x="1048.6" y="825.4" width="19" height="14" fill="none" stroke="#d0d0d0" stroke-width="1.2"/>
 <path d="M1061.5,831.5 L1064,829" stroke="#e0e0e0" stroke-width="1.6"/><polygon points="1066,827 1066,832 1061,827" fill="#e0e0e0"/>
 <path d="M1054.5,833.3 L1052,835.8" stroke="#e0e0e0" stroke-width="1.6"/><polygon points="1050,837.8 1050,832.8 1055,837.8" fill="#e0e0e0"/>
 <g fill="#e0e0e0"><rect x="1080.5" y="823.6" width="19.5" height="2.6"/><rect x="1080.5" y="831.1" width="19.5" height="2.6"/><rect x="1080.5" y="838.6" width="19.5" height="2.6"/></g>
</svg>
<div class="t" style="left:77px;top:823px;color:#f4f4f4;font-weight:bold">模型</div>
<div class="t" style="left:137px;top:823px;color:#e8e8e8">布局1</div>
<div class="t" style="left:208px;top:823px;color:#e8e8e8">布局2</div>
<div class="t" style="left:449px;top:825px;color:#f4f4f4">模型</div>
<div class="t" style="left:878.5px;top:824px;color:#e8e8e8;font-size:15px;letter-spacing:-0.6px">1:1</div>
<div class="ds" style="left:550.5px;top:830px;border-left-width:5px;border-right-width:5px;border-top-width:5px"></div>
<div class="ds" style="left:634px;top:830px;border-left-width:5px;border-right-width:5px;border-top-width:5px"></div>
<div class="ds" style="left:684px;top:830px;border-left-width:5px;border-right-width:5px;border-top-width:5px"></div>
<div class="ds" style="left:765px;top:830px;border-left-width:5px;border-right-width:5px;border-top-width:5px"></div>
<div class="ds" style="left:900px;top:830px;border-left-width:5px;border-right-width:5px;border-top-width:5px"></div>
<div class="ds" style="left:953px;top:830px;border-left-width:5px;border-right-width:5px;border-top-width:5px"></div>
</body></html>
